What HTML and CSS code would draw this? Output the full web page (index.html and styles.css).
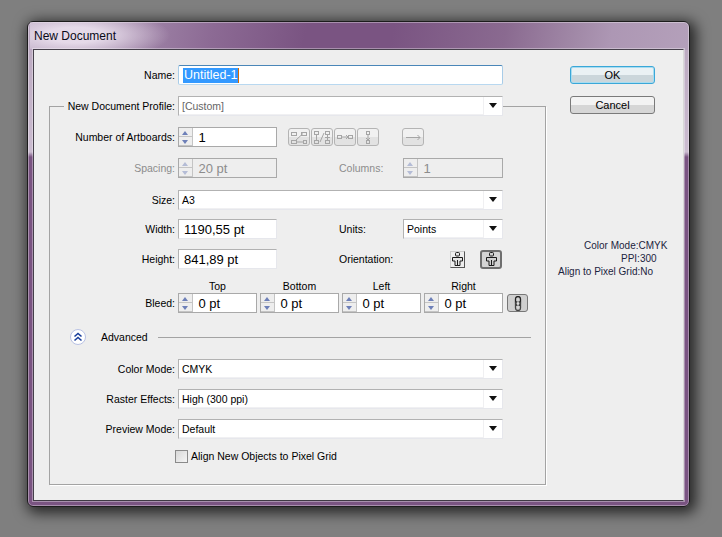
FILE: index.html
```html
<!DOCTYPE html>
<html lang="en">
<head>
  <meta charset="UTF-8">
  <title>New Document</title>
  <link rel="stylesheet" href="styles.css">
</head>
<body>
  <div class="window">
    <div class="titlebar">New Document</div>
    <div class="panel">
      <div class="main">
        <div class="row name-row">
          <label class="label name-label">Name:</label>
          <div class="name-input"><span class="selected">Untitled-1</span><span class="caret"></span></div>
        </div>

        <fieldset class="group">
          <legend class="profile">
            <label class="label profile-label">New Document Profile:</label>
            <div class="select wide muted"><span class="value">[Custom]</span><span class="arrow"></span></div>
          </legend>

          <div class="row artboards-row">
            <label class="label">Number of Artboards:</label>
            <div class="spinner short">
              <div class="spin"><i class="up"></i><i class="down"></i></div>
              <span class="num">1</span>
            </div>
            <div class="tools">
              <button class="tool"><svg width="20" height="15" viewBox="0 0 20 15"><g fill="none" stroke="#a5a5a5"><rect x="2.500" y="2.500" width="5" height="3"/><rect x="12.500" y="2.500" width="5" height="3"/><rect x="2.500" y="10.500" width="5" height="3"/><rect x="14.500" y="10.500" width="3" height="3"/><path d="M14 3.500L6 11M8 12h6"/></g></svg></button>
              <button class="tool"><svg width="20" height="15" viewBox="0 0 20 15"><g fill="none" stroke="#a5a5a5"><rect x="2.500" y="1.500" width="4" height="3"/><rect x="13.500" y="1.500" width="4" height="3"/><rect x="2.500" y="10.500" width="4" height="3"/><rect x="13.500" y="10.500" width="4" height="3"/><path d="M4.500 5v5M12 3L8 12M15.500 5v5M13 7.500h5"/></g></svg></button>
              <button class="tool"><svg width="20" height="15" viewBox="0 0 20 15"><g fill="none" stroke="#a5a5a5"><rect x="2.500" y="5.500" width="4" height="3"/><rect x="13.500" y="5.500" width="4" height="3"/><path d="M7 7h6M11 5l2 2-2 2"/></g></svg></button>
              <button class="tool"><svg width="20" height="15" viewBox="0 0 20 15"><g fill="none" stroke="#a5a5a5"><rect x="8.500" y="1.500" width="3" height="3"/><rect x="8.500" y="10.500" width="3" height="3"/><path d="M10 5v5M8 8l2 2 2-2"/></g></svg></button>
              <button class="tool last"><svg width="20" height="15" viewBox="0 0 20 15"><path d="M3 7.500h14M14.500 5l2.500 2.500-2.500 2.500" fill="none" stroke="#a5a5a5"/></svg></button>
            </div>
          </div>

          <div class="row spacing-row disabled">
            <label class="label">Spacing:</label>
            <div class="spinner short">
              <div class="spin"><i class="up"></i><i class="down"></i></div>
              <span class="num">20 pt</span>
            </div>
            <label class="side-label">Columns:</label>
            <div class="spinner side">
              <div class="spin"><i class="up"></i><i class="down"></i></div>
              <span class="num">1</span>
            </div>
          </div>

          <div class="row size-row">
            <label class="label">Size:</label>
            <div class="select wide"><span class="value">A3</span><span class="arrow"></span></div>
          </div>

          <div class="row width-row">
            <label class="label">Width:</label>
            <div class="field short">1190,55 pt</div>
            <label class="side-label">Units:</label>
            <div class="select side"><span class="value">Points</span><span class="arrow"></span></div>
          </div>

          <div class="row height-row">
            <label class="label">Height:</label>
            <div class="field short">841,89 pt</div>
            <label class="side-label">Orientation:</label>
            <div class="orient">
              <button class="orient-btn portrait"><svg width="11" height="14" viewBox="0 0 11 14"><g fill="#e4e4e4" stroke="#1a1a1a"><rect x="3.500" y="0.500" width="4" height="3.500" rx="1"/><path d="M0.500 5.500h10v3.500h-2.500v4.500h-5V9H0.500z"/><path d="M5.500 8v5.500" fill="none"/></g></svg></button>
              <button class="orient-btn landscape"><svg width="11" height="14" viewBox="0 0 11 14"><g fill="#cfcfcf" stroke="#1a1a1a"><rect x="3.500" y="0.500" width="4" height="3.500" rx="1"/><path d="M0.500 5.500h10v3.500h-2.500v4.500h-5V9H0.500z"/><path d="M5.500 8v5.500" fill="none"/></g></svg></button>
            </div>
          </div>

          <div class="bleed">
            <span></span>
            <span class="bleed-head">Top</span>
            <span class="bleed-head">Bottom</span>
            <span class="bleed-head">Left</span>
            <span class="bleed-head">Right</span>
            <span></span>
            <label class="label">Bleed:</label>
            <div class="spinner"><div class="spin"><i class="up"></i><i class="down"></i></div><span class="num">0 pt</span></div>
            <div class="spinner"><div class="spin"><i class="up"></i><i class="down"></i></div><span class="num">0 pt</span></div>
            <div class="spinner"><div class="spin"><i class="up"></i><i class="down"></i></div><span class="num">0 pt</span></div>
            <div class="spinner"><div class="spin"><i class="up"></i><i class="down"></i></div><span class="num">0 pt</span></div>
            <button class="link-btn"><svg width="10" height="15" viewBox="0 0 10 15"><g fill="none"><rect x="2.500" y="0.500" width="5" height="9" rx="2.500" stroke="#222" stroke-width="1.300"/><rect x="2.500" y="5.500" width="5" height="9" rx="2.500" stroke="#444" stroke-width="1.300"/><path d="M5 3.500v8" stroke="#eee"/></g></svg></button>
          </div>

          <div class="advanced">
            <span class="adv-toggle"><svg width="10" height="10" viewBox="0 0 10 10"><path d="M1.500 4.500L5 1.500l3.500 3M1.500 8.500L5 5.500l3.500 3" fill="none" stroke="#1a3f9c" stroke-width="1.600"/></svg></span>
            <span class="adv-label">Advanced</span>
            <span class="adv-line"></span>
          </div>

          <div class="row color-row">
            <label class="label">Color Mode:</label>
            <div class="select wide"><span class="value">CMYK</span><span class="arrow"></span></div>
          </div>
          <div class="row raster-row">
            <label class="label">Raster Effects:</label>
            <div class="select wide"><span class="value">High (300 ppi)</span><span class="arrow"></span></div>
          </div>
          <div class="row preview-row">
            <label class="label">Preview Mode:</label>
            <div class="select wide"><span class="value">Default</span><span class="arrow"></span></div>
          </div>

          <div class="check-row">
            <span class="checkbox"></span>
            <label>Align New Objects to Pixel Grid</label>
          </div>
        </fieldset>
      </div>

      <div class="aside">
        <button class="btn ok">OK</button>
        <button class="btn cancel">Cancel</button>
        <div class="info">
          <p class="info-1">Color Mode:CMYK</p>
          <p class="info-2">PPI:300</p>
          <p class="info-3">Align to Pixel Grid:No</p>
        </div>
      </div>
    </div>
  </div>
</body>
</html>
```

FILE: styles.css
```css
* {
  box-sizing: border-box;
}

body {
  margin: 0;
  padding: 21px 0 0 27px;
  height: 537px;
  overflow: hidden;
  background-color: #7f7f7f;
  font-family: "Liberation Sans", Arial, sans-serif;
  font-size: 10.500px;
  color: #000;
}

.window {
  width: 663px;
  height: 486px;
  padding: 0 5px 5px;
  border: 1px solid #1c1c1c;
  border-radius: 6px;
  box-shadow: 3px 3px 14px 3px rgba(0, 0, 0, 0.7), inset 0 0 0 1px rgba(255, 255, 255, 0.35);
  background:
    linear-gradient(100deg, #b9a6c0 0, #a48bac 14%, #8c6a94 28%, #7a5482 42%, #7a5482 55%, #8a6a90 72%, #a28aa8 83%, #ad97b4 88%, #b4a0ba 100%) top / 100% 28px no-repeat,
    linear-gradient(180deg, #b8a5bd 0, #cbbcd0 130px, #7a5482 135px, #7a5482 100%);
}

.titlebar {
  height: 27px;
  margin-left: -3px;
  padding: 7px 0 0 4px;
  font-size: 12px;
  color: #0a0a18;
  background: radial-gradient(ellipse 95px 26px at 45px 13px, rgba(235, 225, 238, 0.9) 30%, rgba(235, 225, 238, 0) 100%) no-repeat;
}

.panel {
  display: flex;
  height: 452px;
  border: 1px solid #45404a;
  border-right-color: #d8d8d8;
  border-bottom-color: #3f3a44;
  background-color: #eeeeee;
  outline: 1px solid rgba(255, 255, 255, 0.35);
}

.main {
  width: 520px;
  padding: 15px 0 0 15px;
}

.row {
  display: flex;
  align-items: center;
  height: 20px;
}

.label {
  flex: none;
  width: 125px;
  margin-right: 3px;
  text-align: right;
  white-space: nowrap;
}

.name-row {
  margin-left: 1px;
}

.name-label {
  width: 125px;
}

.name-input {
  display: flex;
  align-items: center;
  width: 325px;
  height: 20px;
  padding-left: 4px;
  border: 1px solid;
  border-color: #4a86b8 #a8cce8 #b8d8f0 #a8cce8;
  border-radius: 2px;
  background-color: #fff;
  font-size: 12.500px;
}

.selected {
  padding: 0 0 0 1px;
  background-color: #3399ff;
  color: #fff;
  line-height: 15px;
}

.caret {
  width: 1px;
  height: 15px;
  background-color: #d86a00;
}

.group {
  width: 497px;
  height: 389px;
  margin: 11px 0 0;
  padding: 0;
  border: 1px solid #a3a3a3;
  box-shadow: 1px 1px 0 #fff;
}

.profile {
  display: flex;
  align-items: center;
  width: 439px;
  height: 20px;
  margin-left: 14px;
  padding: 0;
  background-color: #eee;
}

.profile-label {
  width: 111px;
}

.select {
  display: flex;
  align-items: center;
  height: 20px;
  border: 1px solid;
  border-color: #b2b2b2 #e6e7ec #e6e7ec #b2b2b2;
  background-color: #fff;
}

.select.wide {
  width: 325px;
}

.select.side {
  width: 100px;
}

.value {
  flex: 1;
  height: 100%;
  padding: 3px 0 0 3px;
  border-right: 1px solid #f0f0f2;
  border-bottom: 1px solid #f0f0f2;
  white-space: nowrap;
}

.muted .value {
  color: #666;
}

.arrow {
  flex: none;
  width: 18px;
  height: 6px;
  position: relative;
}

.arrow::after {
  content: "";
  position: absolute;
  left: 5px;
  top: 0;
  border-style: solid;
  border-width: 5px 4px 0;
  border-color: #111 transparent transparent;
}

.spinner {
  display: flex;
  width: 79px;
  height: 20px;
  border: 1px solid #a9a9a9;
  background-color: #fff;
}

.spinner.short,
.field.short {
  width: 99px;
}

.spinner.side {
  width: 100px;
}

.spin {
  flex: none;
  display: flex;
  flex-direction: column;
  width: 14px;
  background-color: #eee;
  border-right: 1px solid #c4c4c4;
}

.spin i {
  display: block;
  flex: 1;
  position: relative;
  border-bottom: 1px solid #c4c4c4;
}

.spin i::after {
  content: "";
  position: absolute;
  left: 3px;
  top: 3px;
  border-style: solid;
  border-color: transparent;
}

.spin .up::after {
  border-width: 0 3.500px 4px;
  border-bottom-color: #6d7fb8;
}

.spin .down::after {
  border-width: 4px 3.500px 0;
  border-top-color: #6d7fb8;
}

.num {
  padding: 2px 0 0 5.500px;
  font-size: 13px;
  white-space: nowrap;
}

.field {
  height: 20px;
  padding: 2px 0 0 5px;
  border: 1px solid;
  border-color: #b2b2b2 #e6e7ec #e6e7ec #b2b2b2;
  background-color: #fff;
  font-size: 13px;
  white-space: nowrap;
}

.artboards-row {
  margin-top: 11px;
}

.tools {
  display: flex;
  gap: 1px;
  margin-left: 11px;
}

.tool {
  width: 22px;
  height: 18px;
  padding: 0;
  display: flex;
  align-items: center;
  justify-content: center;
  border: 1px solid #b4b4b4;
  border-radius: 3px;
  background: linear-gradient(180deg, #f1f1f1 50%, #e2e2e2 50%);
}

.tool.last {
  margin-left: 22px;
}

.spacing-row {
  margin-top: 11px;
}

.disabled .label,
.disabled .side-label,
.disabled .num {
  color: #8c8c8c;
}

.disabled .spinner {
  background-color: #eee;
}

.disabled .spin i::after {
  opacity: 0.45;
}

.side-label {
  width: 64px;
  margin-left: 62px;
  white-space: nowrap;
}

.size-row {
  margin-top: 12px;
}

.width-row {
  margin-top: 9px;
}

.height-row {
  margin-top: 10px;
}

.orient {
  display: flex;
  align-items: center;
  gap: 15px;
  margin-left: 47px;
}

.orient-btn {
  display: flex;
  align-items: center;
  justify-content: center;
  padding: 0;
}

.portrait {
  width: 15px;
  height: 17px;
  border: 1px solid;
  border-color: #ccc #555 #555 #ccc;
  background-color: #eee;
}

.landscape {
  width: 22px;
  height: 19px;
  border: 2px solid #6e6e6e;
  border-radius: 3px;
  background-color: #d4d4d4;
}

.bleed {
  display: grid;
  grid-template-columns: 125px 79px 79px 79px 79px 21px;
  grid-template-rows: 15px 20px;
  column-gap: 3px;
  align-items: center;
  margin-top: 9px;
}

.bleed .label {
  margin: 0;
}

.bleed-head {
  text-align: center;
}

.link-btn {
  width: 21px;
  height: 18px;
  padding: 0;
  display: flex;
  align-items: center;
  justify-content: center;
  margin-left: 1px;
  border: 1px solid #777;
  border-radius: 3px;
  background-color: #cfcfcf;
}

.advanced {
  display: flex;
  align-items: center;
  height: 16px;
  margin: 16px 14px 0 20px;
}

.adv-toggle {
  display: flex;
  align-items: center;
  justify-content: center;
  width: 16px;
  height: 16px;
  border: 1px solid #b9c2e4;
  border-radius: 50%;
  background-color: #fff;
}

.adv-label {
  margin-left: 15px;
  white-space: nowrap;
}

.adv-line {
  flex: 1;
  height: 1px;
  margin-left: 10px;
  background-color: #a3a3a3;
}

.color-row {
  margin-top: 14px;
}

.raster-row {
  margin-top: 10px;
}

.preview-row {
  margin-top: 10px;
}

.check-row {
  display: flex;
  align-items: center;
  gap: 3px;
  height: 14px;
  margin: 10px 0 0 125px;
}

.checkbox {
  width: 13px;
  height: 13px;
  border: 1px solid #8a8a8a;
  background: linear-gradient(135deg, #d8d8d8, #f4f4f4);
}

.aside {
  flex: 1;
  padding: 16px 0 0 16px;
}

.btn {
  display: block;
  width: 85px;
  height: 18px;
  padding: 0;
  border-radius: 3px;
  font-family: "Liberation Sans", Arial, sans-serif;
  font-size: 11px;
  color: #000;
  background: linear-gradient(180deg, #f3f3f3 50%, #d6d6d6 50%);
  border: 1px solid #7a7a7a;
}

.ok {
  border: 1px solid #3aa7d8;
  box-shadow: inset 0 0 0 1px #a8dcf0;
  background: linear-gradient(180deg, #eaf1f4 50%, #cbd6db 50%);
}

.cancel {
  margin-top: 12px;
}

.info {
  margin-top: 125px;
  font-size: 10px;
  color: #1c2440;
  white-space: nowrap;
}

.info p {
  margin: 0;
  height: 13px;
  line-height: 13px;
}

.info .info-1 {
  padding-left: 14px;
}

.info .info-2 {
  padding-left: 51px;
}

.info .info-3 {
  margin-left: -12px;
}
```
